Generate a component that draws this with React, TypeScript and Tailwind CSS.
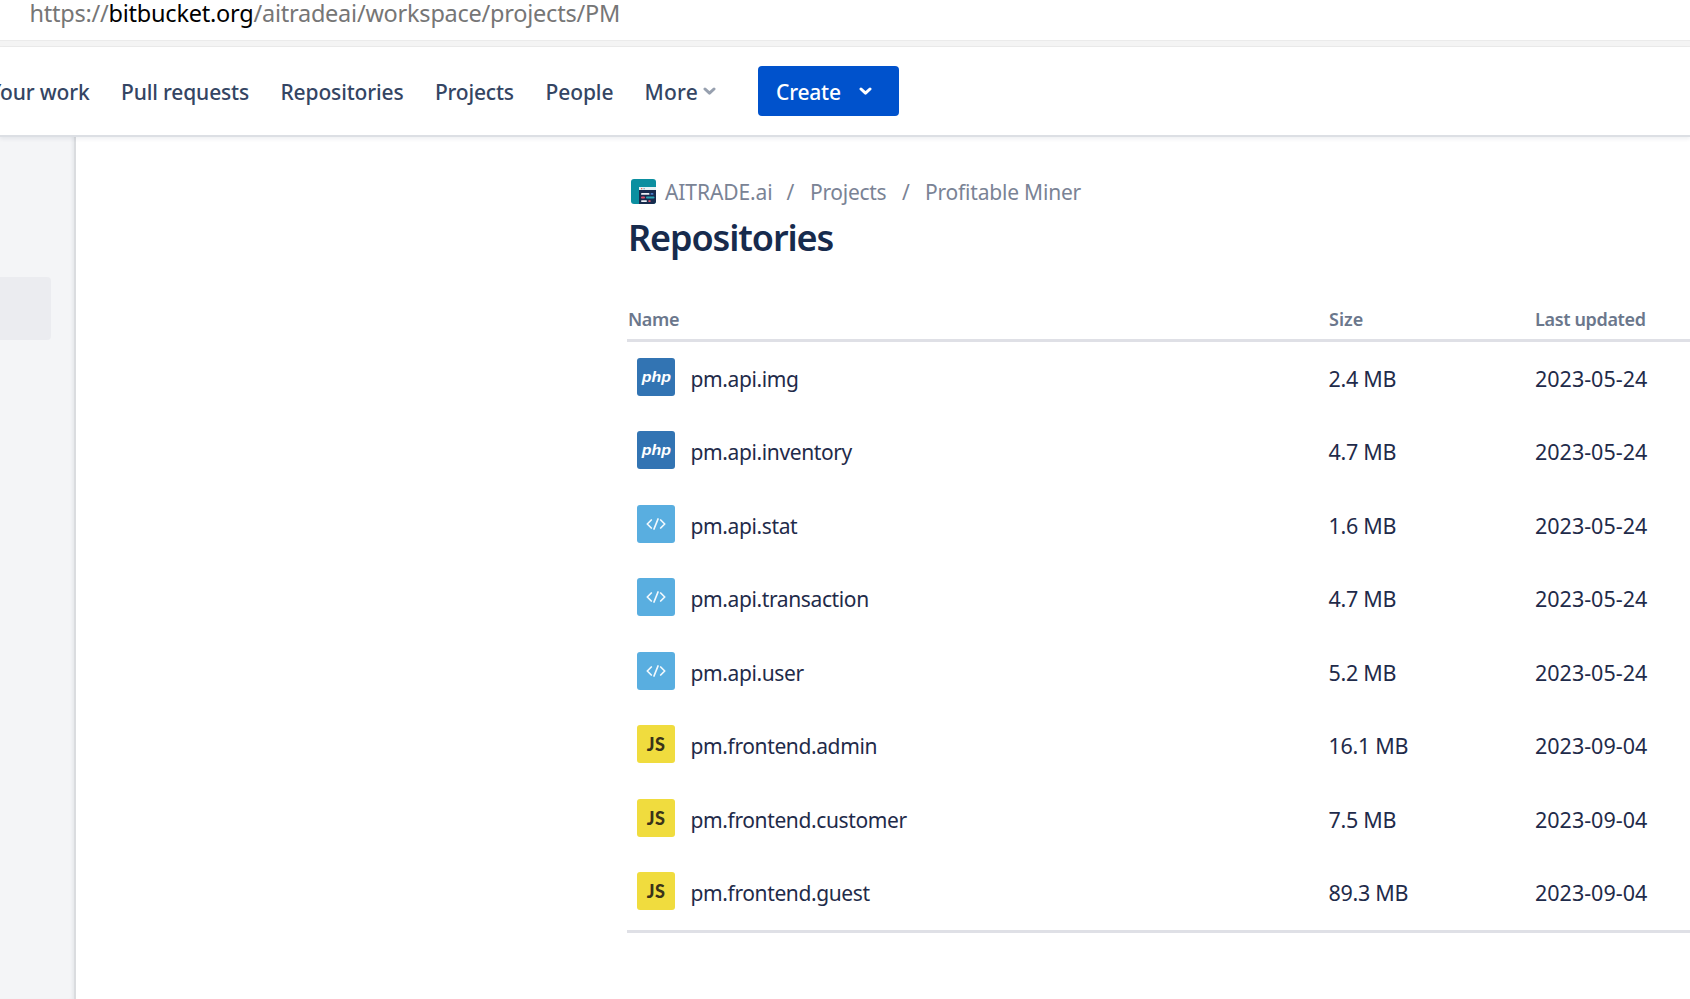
type Kind = "php" | "code" | "js";

const navItems = [
  { label: "Your work", cls: "w-[132px] tracking-[-0.15px]" },
  { label: "Pull requests", cls: "w-[159.5px] tracking-[-0.15px]" },
  { label: "Repositories", cls: "w-[154.5px] tracking-[-0.15px]" },
  { label: "Projects", cls: "w-[110.5px] tracking-[-0.2px]" },
  { label: "People", cls: "w-[99px] tracking-[-0.1px]" },
  { label: "More", cls: "w-[58.5px] tracking-[0.2px]" },
];

const repos: { name: string; size: string; date: string; kind: Kind }[] = [
  { name: "pm.api.img", size: "2.4 MB", date: "2023-05-24", kind: "php" },
  { name: "pm.api.inventory", size: "4.7 MB", date: "2023-05-24", kind: "php" },
  { name: "pm.api.stat", size: "1.6 MB", date: "2023-05-24", kind: "code" },
  { name: "pm.api.transaction", size: "4.7 MB", date: "2023-05-24", kind: "code" },
  { name: "pm.api.user", size: "5.2 MB", date: "2023-05-24", kind: "code" },
  { name: "pm.frontend.admin", size: "16.1 MB", date: "2023-09-04", kind: "js" },
  { name: "pm.frontend.customer", size: "7.5 MB", date: "2023-09-04", kind: "js" },
  { name: "pm.frontend.guest", size: "89.3 MB", date: "2023-09-04", kind: "js" },
];

function Chevron({ className }: { className: string }) {
  return (
    <svg viewBox="0 0 13 9" className={className} fill="none" stroke="currentColor" strokeWidth="3" strokeLinecap="round" strokeLinejoin="round">
      <path d="M2 2l4.5 4.2L11 2" />
    </svg>
  );
}

function WorkspaceAvatar() {
  return (
    <svg viewBox="0 0 25 25" className="-mt-1 size-[25px] shrink-0 rounded-[3px]">
      <rect width="25" height="25" fill="#0b8fa0" />
      <rect x="8" y="8" width="17" height="17" fill="#172b4d" />
      <rect x="8" y="8" width="17" height="3" fill="#e6f2f5" />
      <rect x="10" y="9" width="1.3" height="1.3" fill="#e2725b" />
      <rect x="12.5" y="9" width="1.3" height="1.3" fill="#8aa0b5" />
      <rect x="10" y="14" width="8.5" height="1.8" rx=".9" fill="#eef1f6" />
      <rect x="19.5" y="14" width="3" height="1.8" rx=".9" fill="#4c7dc9" />
      <rect x="10" y="17.6" width="4" height="1.8" rx=".9" fill="#e0526a" />
      <rect x="15" y="17.6" width="8.5" height="1.8" rx=".9" fill="#2aa5b5" />
      <rect x="10" y="21.2" width="6" height="1.8" rx=".9" fill="#eef1f6" />
      <rect x="17.2" y="21.2" width="2.6" height="1.8" rx=".9" fill="#e0526a" />
    </svg>
  );
}

function RepoIcon({ kind }: { kind: Kind }) {
  if (kind === "php")
    return (
      <div className="flex size-[38px] justify-center rounded-[3px] bg-[#3274b3] font-['Liberation_Sans',sans-serif] text-[14.5px] leading-[38px] font-bold text-white italic">
        <span className="scale-x-110">php</span>
      </div>
    );
  if (kind === "js")
    return (
      <div className="flex size-[38px] justify-center rounded-[3px] bg-[#f0dc3e] font-['Lato',sans-serif] text-[18px] leading-[38px] font-black tracking-[0.5px] text-[#3a3319]">
        JS
      </div>
    );
  return (
    <div className="flex size-[38px] items-center justify-center rounded-[3px] bg-[#59aee0]">
      <svg viewBox="0 0 20 12" className="h-3 w-5" fill="none" stroke="#f2f9fd" strokeWidth="1.7" strokeLinecap="round" strokeLinejoin="round">
        <path d="M5.3 2L1.3 6l4 4M14.7 2l4 4-4 4M12 1L8 11" />
      </svg>
    </div>
  );
}

export default function App() {
  return (
    <div className="flex h-[999px] w-[1690px] flex-col overflow-hidden bg-white font-['Noto_Sans',sans-serif] whitespace-nowrap text-[#1f2b4a]">
      <div className="h-10 shrink-0 pl-[29.5px] text-[23.5px] leading-[27px] tracking-[-0.24px] text-[#767676]">
        https://<span className="text-black">bitbucket.org</span>/aitradeai/workspace/projects/PM
      </div>
      <div className="h-[7px] shrink-0 border-y border-[#ebebeb] bg-[#f4f4f4]" />

      <nav className="z-10 flex h-[90px] shrink-0 items-center border-b-2 border-[#dcdfe4] text-[21px] font-medium text-[#344563] shadow-[0_2px_4px_rgba(9,30,66,0.07)]">
        <div className="-ml-[11px] flex pt-[3px]">
          {navItems.map((item) => (
            <a key={item.label} className={item.cls}>
              {item.label}
            </a>
          ))}
        </div>
        <Chevron className="h-[9px] w-[13px] text-[#97a0af]" />
        <button className="ml-[41.5px] flex h-[50px] w-[141px] items-center rounded-[4px] bg-[#0052cc] pl-[18.5px] text-left text-white">
          <span className="w-[83px] pt-[3px] tracking-[-0.2px]">Create</span>
          <Chevron className="h-[9px] w-[13px]" />
        </button>
      </nav>

      <div className="-mt-px flex min-h-0 flex-1">
        <aside className="w-[76px] shrink-0 border-r-2 border-[#dadcdf] bg-[#f4f5f7] pt-[141px] shadow-[inset_-3px_0_3px_-1px_rgba(9,30,66,0.05)]">
          <div className="h-[63px] w-[51px] rounded-r-[4px] bg-[#ebecf0]" />
        </aside>

        <main className="ml-[551px] flex flex-1 flex-col pt-[39px]">
          <div className="flex h-[36px] items-center pl-1 text-[21px] text-[#7a8395]">
            <WorkspaceAvatar />
            <span className="ml-[9px] w-[121.5px] tracking-[-0.1px]">AITRADE.ai</span>
            <span className="w-[23.5px]">/</span>
            <span className="w-[92px] tracking-[-0.3px]">Projects</span>
            <span className="w-[23px]">/</span>
            <span className="tracking-[-0.2px]">Profitable Miner</span>
          </div>
          <h1 className="mt-[7px] pl-px text-[36px] leading-[40px] font-semibold tracking-[-1.1px] text-[#172b4d]">Repositories</h1>

          <div className="mt-[46px] flex h-[38px] border-b-[3px] border-[#dfe0e6] pl-px text-[18px] leading-[30px] font-semibold text-[#6b778c]">
            <span className="w-[701px] tracking-[-0.4px]">Name</span>
            <span className="w-[206px]">Size</span>
            <span className="tracking-[-0.35px]">Last updated</span>
          </div>

          <div className="border-b-[3px] border-[#dfe0e6]">
            {repos.map((repo) => (
              <div key={repo.name} className="flex h-[73.5px] items-center">
                <div className="mr-[15.5px] ml-[10px] pb-[4.5px]">
                  <RepoIcon kind={repo.kind} />
                </div>
                <span className="w-[638px] pt-px text-[21px] tracking-[-0.38px]">{repo.name}</span>
                <span className="w-[206.5px] text-[21.5px] tracking-[-0.3px]">{repo.size}</span>
                <span className="text-[21.5px]">{repo.date}</span>
              </div>
            ))}
          </div>
        </main>
      </div>
    </div>
  );
}
